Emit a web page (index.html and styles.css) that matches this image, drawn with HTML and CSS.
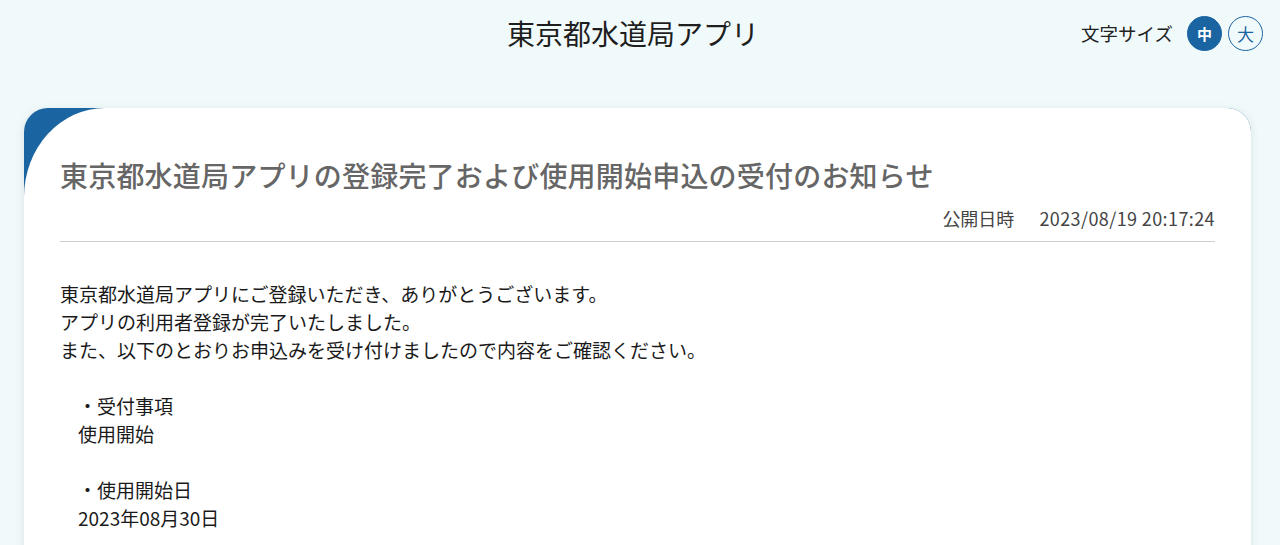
FILE: index.html
```html
<!DOCTYPE html>
<html lang="ja">
<head>
<meta charset="utf-8">
<title>東京都水道局アプリ</title>
<link rel="stylesheet" href="styles.css">
</head>
<body>
<header class="app-header">
  <h1 class="app-title">東京都水道局アプリ</h1>
  <div class="font-size">
    <span class="font-size-label">文字サイズ</span>
    <button class="size-btn size-btn-active" type="button">中</button>
    <button class="size-btn" type="button">大</button>
  </div>
</header>
<main class="page">
  <article class="card">
    <div class="card-inner">
      <div class="card-head">
        <h2 class="card-title">東京都水道局アプリの登録完了および使用開始申込の受付のお知らせ</h2>
        <div class="card-date"><span class="date-label">公開日時</span><span class="date-value">2023/08/19 20:17:24</span></div>
      </div>
      <div class="card-body">
        <p>東京都水道局アプリにご登録いただき、ありがとうございます。</p>
        <p>アプリの利用者登録が完了いたしました。</p>
        <p>また、以下のとおりお申込みを受け付けましたので内容をご確認ください。</p>
        <p class="gap-before indent">・受付事項</p>
        <p class="indent">使用開始</p>
        <p class="gap-before indent">・使用開始日</p>
        <p class="indent">2023年08月30日</p>
      </div>
    </div>
  </article>
</main>
</body>
</html>
```
FILE: styles.css
```css
* { box-sizing: border-box; }
html, body {
  margin: 0;
  padding: 0;
  background: #f1fafa;
  font-family: "Noto Sans CJK JP", "Noto Sans", sans-serif;
  color: #222;
  overflow: hidden;
}
.app-header {
  position: relative;
  height: 66px;
  display: flex;
  align-items: center;
  justify-content: center;
  padding-right: 14px;
}
.app-title {
  margin: 0;
  font-size: 28px;
  font-weight: 400;
  line-height: 40px;
  color: #1e1e1e;
}
.font-size {
  position: absolute;
  right: 17px;
  top: 15px;
  display: flex;
  align-items: center;
  gap: 6px;
}
.font-size-label {
  font-size: 18.5px;
  line-height: 36px;
  margin-right: 8px;
  color: #222;
}
.size-btn {
  width: 35px;
  height: 35px;
  border-radius: 50%;
  border: 1.5px solid #1b64a2;
  background: transparent;
  color: #1b64a2;
  font-family: inherit;
  font-size: 17px;
  padding: 0;
  display: flex;
  align-items: center;
  justify-content: center;
  line-height: 1;
}
.size-btn-active {
  background: #1b64a2;
  color: #fff;
  font-size: 15px;
  font-weight: 700;
}
.page {
  padding: 42px 29px 0 24px;
}
.card {
  background: #1b64a2;
  border-radius: 24px;
  overflow: hidden;
  box-shadow: 0 2px 10px rgba(0, 0, 0, 0.10);
}
.card-inner {
  background: #fff;
  border-top-left-radius: 81px 89px;
  padding: 47px 36px 40px;
  min-height: 600px;
}
.card-head {
  border-bottom: 1px solid #cfcfcf;
  padding-bottom: 10px;
}
.card-title {
  margin: 0;
  font-size: 28px;
  line-height: 40px;
  font-weight: 500;
  color: #666;
  letter-spacing: 0.2px;
}
.card-date {
  margin-top: 10px;
  display: flex;
  justify-content: flex-end;
  gap: 25px;
  font-size: 18px;
  line-height: 26px;
  color: #444;
}
.date-value {
  letter-spacing: 0.4px;
}
.card-body {
  padding-top: 38px;
  font-size: 19px;
  line-height: 28px;
  color: #1a1a1a;
}
.card-body p {
  margin: 0;
}
.card-body .gap-before {
  margin-top: 28px;
}
.card-body .indent {
  padding-left: 18px;
}
```
